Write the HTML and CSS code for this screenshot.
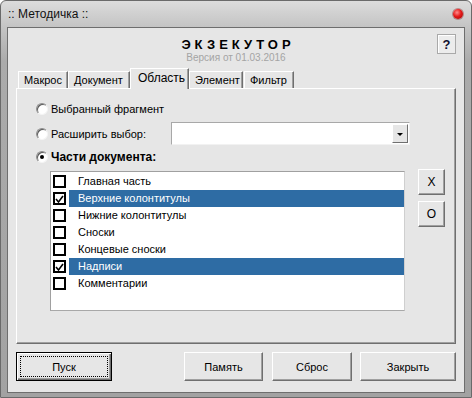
FILE: index.html
```html
<!doctype html>
<html lang="ru">
<head>
    <meta charset="UTF-8">
    <title>Методичка</title>
    <link rel="stylesheet" href="styles.css">
</head>
<body>
    <div class="window">
        <div class="titlebar">
            <span class="caption">:: Методичка ::</span>
            <span class="close"></span>
        </div>
        <div class="client">
            <div class="header">
                <div class="brand">
                    <div class="brand-name">ЭКЗЕКУТОР</div>
                    <div class="brand-ver">Версия от 01.03.2016</div>
                </div>
                <div class="help">?</div>
            </div>

            <div class="tabs">
                <div class="tab tab-macro">Макрос</div>
                <div class="tab tab-doc">Документ</div>
                <div class="tab tab-area active">Область</div>
                <div class="tab tab-elem">Элемент</div>
                <div class="tab tab-filter">Фильтр</div>
            </div>

            <div class="panel">
                <div class="opt row1">
                    <span class="radio"></span>
                    <span>Выбранный фрагмент</span>
                </div>
                <div class="row2">
                    <div class="opt opt-label">
                        <span class="radio"></span>
                        <span>Расширить выбор:</span>
                    </div>
                    <div class="combo"><span class="combo-btn"><span class="arrow"></span></span></div>
                </div>
                <div class="opt row3">
                    <span class="radio on"></span>
                    <span>Части документа:</span>
                </div>

                <div class="parts">
                    <div class="list">
                        <div class="item"><span class="check"></span><span class="item-text">Главная часть</span></div>
                        <div class="item selected"><span class="check on"><svg width="9" height="9" viewBox="0 0 9 9"><polyline points="1,4 3.5,7 8,1" /></svg></span><span class="item-text">Верхние колонтитулы</span></div>
                        <div class="item"><span class="check"></span><span class="item-text">Нижние колонтитулы</span></div>
                        <div class="item"><span class="check"></span><span class="item-text">Сноски</span></div>
                        <div class="item"><span class="check"></span><span class="item-text">Концевые сноски</span></div>
                        <div class="item selected"><span class="check on"><svg width="9" height="9" viewBox="0 0 9 9"><polyline points="1,4 3.5,7 8,1" /></svg></span><span class="item-text">Надписи</span></div>
                        <div class="item"><span class="check"></span><span class="item-text">Комментарии</span></div>
                    </div>
                    <div class="side">
                        <div class="btn small">X</div>
                        <div class="btn small">O</div>
                    </div>
                </div>
            </div>

            <div class="footer">
                <div class="btn btn-default"><span class="focus">Пуск</span></div>
                <div class="btn btn-mem">Память</div>
                <div class="btn btn-reset">Сброс</div>
                <div class="btn btn-close">Закрыть</div>
            </div>
        </div>
    </div>
</body>
</html>
```

FILE: styles.css
```css
body{
    margin: 0;
    background: #fff;
    font-family: "Liberation Sans", Arial, sans-serif;
    font-size: 11px;
    color: #000;
}

/* window frame */
.window{
    width: 472px;
    height: 398px;
    box-sizing: border-box;
    border: 1px solid #6a6a6a;
    border-radius: 6px 6px 0 0;
    background: linear-gradient(to bottom, #dcdcdc 0, #c4c4c4 26px, #ababab 60px, #a2a2a2 100%);
    padding: 0 6px 4px 6px;
    display: flex;
    flex-direction: column;
}
.titlebar{
    height: 26px;
    display: flex;
    align-items: center;
    padding-left: 1px;
}
.caption{
    font-size: 12px;
    color: #111;
}
.close{
    margin-left: auto;
    margin-right: 2px;
    width: 10px;
    height: 10px;
    border-radius: 50%;
    background: radial-gradient(circle at 40% 35%, #ff8c8c 0, #e51b1b 45%, #9c0000 100%);
    box-shadow: 0 0 0 1px rgba(120,0,0,.35);
}

.client{
    flex: 1;
    background: #e6e6e6;
    border: 1px solid #6e6e6e;
    display: flex;
    flex-direction: column;
}

/* header */
.header{
    height: 40px;
    display: grid;
    grid-template-columns: 1fr auto 1fr;
}
.brand{
    grid-column: 2;
    text-align: center;
    padding-top: 10px;
}
.brand-name{
    font-size: 13px;
    font-weight: bold;
    letter-spacing: 4px;
    margin-right: -4px;
    line-height: 14px;
}
.brand-ver{
    font-size: 10px;
    line-height: 11px;
    color: #a4a4a4;
}
.help{
    grid-column: 3;
    justify-self: end;
    align-self: start;
    margin: 6px 8px 0 0;
    width: 19px;
    height: 20px;
    box-sizing: border-box;
    border: 1px solid #a9a9a9;
    box-shadow: inset 1px 1px 0 #fff;
    background: #ececec;
    font-size: 13px;
    font-weight: bold;
    color: #101030;
    display: flex;
    align-items: center;
    justify-content: center;
}

/* tabs */
.tabs{
    height: 20px;
    margin-left: 10px;
    display: flex;
    align-items: flex-end;
}
.tab{
    height: 17px;
    box-sizing: border-box;
    border-top: 1px solid #fff;
    border-left: 1px solid #fff;
    border-right: 1px solid #6f6f6f;
    box-shadow: inset -1px 0 0 #a0a0a0;
    background: #e6e6e6;
    font-size: 11px;
    line-height: 16px;
    padding-left: 5px;
}
.tab-macro{ width: 50px; }
.tab-doc{ width: 62px; }
.tab-area{ width: 59px; }
.tab-elem{ width: 54px; }
.tab-filter{ width: 50px; margin-left: 1px; }
.tab.active{
    height: 21px;
    margin-bottom: -1px;
    position: relative;
    z-index: 1;
    line-height: 18px;
    padding-left: 7px;
    font-size: 12px;
}

.panel{
    height: 256px;
    box-sizing: border-box;
    margin: 0 8px 0 8px;
    border-top: 1px solid #fff;
    border-left: 1px solid #fff;
    border-right: 1px solid #6f6f6f;
    border-bottom: 1px solid #6f6f6f;
    box-shadow: inset -1px -1px 0 #a0a0a0;
    padding-left: 19px;
}

/* options */
.opt{
    display: flex;
    align-items: center;
    height: 16px;
}
.opt .radio{
    margin-right: 3px;
}
.row1{ margin-top: 12px; }
.row2{
    margin-top: 5px;
    height: 23px;
    display: flex;
    align-items: center;
}
.opt-label{ width: 135px; }
.row3{
    margin-top: 4px;
    font-weight: bold;
    font-size: 12px;
}
.radio{
    width: 12px;
    height: 12px;
    box-sizing: border-box;
    border-radius: 50%;
    border: 1px solid;
    border-color: #8c8c8c #f4f4f4 #f4f4f4 #8c8c8c;
    box-shadow: inset 1px 1px 0 #5a5a5a;
    background: #fff;
    position: relative;
    flex: none;
}
.radio.on::after{
    content: "";
    position: absolute;
    left: 3px;
    top: 3px;
    width: 4px;
    height: 4px;
    border-radius: 50%;
    background: #000;
}

.combo{
    width: 239px;
    height: 23px;
    box-sizing: border-box;
    border: 1px solid #a8a8a8;
    border-right-color: #f2f2f2;
    border-bottom-color: #f2f2f2;
    background: #fff;
    display: flex;
    justify-content: flex-end;
    padding: 1px;
}
.combo-btn{
    width: 16px;
    box-sizing: border-box;
    background: #e6e6e6;
    border-top: 1px solid #fff;
    border-left: 1px solid #fff;
    border-right: 1px solid #6f6f6f;
    border-bottom: 1px solid #6f6f6f;
    display: flex;
    align-items: center;
    justify-content: center;
}
.arrow{
    width: 0;
    height: 0;
    border-left: 3px solid transparent;
    border-right: 3px solid transparent;
    border-top: 3px solid #000;
    margin-top: 1px;
}

/* list */
.parts{
    margin-top: 4px;
    display: flex;
    align-items: flex-start;
}
.list{
    margin-top: 2px;
    margin-left: 14px;
    width: 355px;
    height: 140px;
    box-sizing: border-box;
    border: 1px solid #a0a0a0;
    border-right-color: #cfcfcf;
    border-bottom-color: #a8a8a8;
    background: #fff;
    padding: 1px 0 0 2px;
}
.item{
    height: 17px;
    display: flex;
    align-items: center;
}
.check{
    width: 13px;
    height: 13px;
    box-sizing: border-box;
    border: 2px solid #000;
    background: #fff;
    flex: none;
    display: flex;
}
.check svg{
    margin-top: 1px;
}
.check polyline{
    fill: none;
    stroke: #000;
    stroke-width: 1.6;
}
.item-text{
    flex: 1;
    margin-left: 3px;
    padding-left: 9px;
    line-height: 17px;
    height: 17px;
}
.item.selected .item-text{
    background: #2e6ca4;
    color: #fff;
}

.side{
    margin-left: 13px;
    display: flex;
    flex-direction: column;
    gap: 6px;
}

/* buttons */
.btn{
    box-sizing: border-box;
    background: #e6e6e6;
    border: 1px solid;
    border-color: #fff #6f6f6f #6f6f6f #fff;
    box-shadow: inset -1px -1px 0 #a0a0a0;
    display: flex;
    align-items: center;
    justify-content: center;
    font-size: 11px;
}
.btn.small{
    width: 27px;
    height: 26px;
    font-size: 12px;
}

.footer{
    margin: 8px 8px 0 8px;
    display: flex;
    height: 29px;
}
.footer .btn{ height: 29px; }
.btn-default{
    width: 96px;
    border: 1px solid #000;
    box-shadow: inset 1px 1px 0 #fff, inset -1px -1px 0 #6f6f6f, inset -2px -2px 0 #a0a0a0;
    padding: 3px;
}
.focus{
    flex: 1;
    align-self: stretch;
    border: 1px dotted #000;
    display: flex;
    align-items: center;
    justify-content: center;
}
.btn-mem{ width: 79px; margin-left: auto; }
.btn-reset{ width: 80px; margin-left: 9px; }
.btn-close{ width: 96px; margin-left: 8px; }
```
